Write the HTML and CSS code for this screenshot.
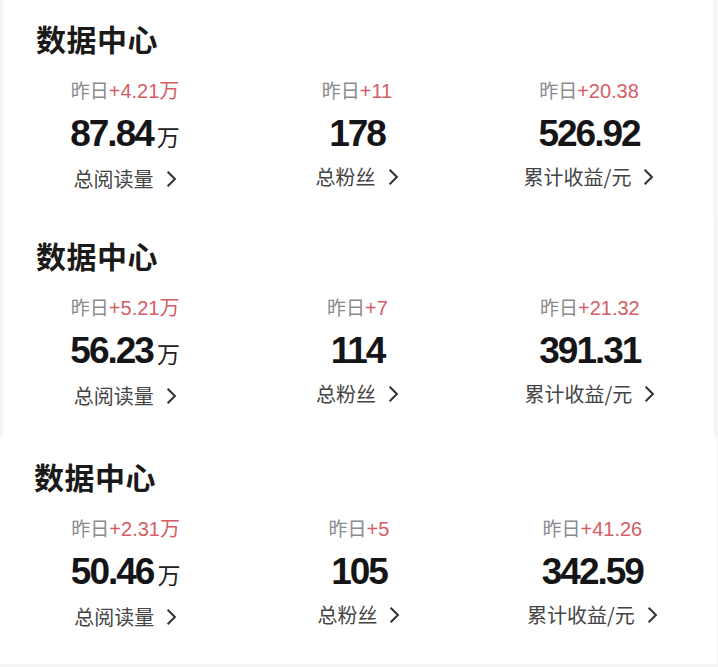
FILE: index.html
```html
<!DOCTYPE html>
<html lang="zh-CN">
<head>
  <meta charset="UTF-8" />
  <meta name="viewport" content="width=device-width, initial-scale=1.0" />
  <title>数据中心</title>
  <link rel="stylesheet" href="styles.css">
</head>
<body>
  <div class="card card-one">
    <h2 class="title">数据中心</h2>
    <div class="stats">
      <div class="stat">
        <div class="delta">昨日<span class="up">+4.21万</span></div>
        <div class="value">87.84<span class="unit">万</span></div>
        <div class="label">总阅读量 <svg class="chevron" viewBox="0 0 10 16"><polyline points="2,1.5 8.5,8 2,14.5" /></svg></div>
      </div>
      <div class="stat">
        <div class="delta">昨日<span class="up">+11</span></div>
        <div class="value">178</div>
        <div class="label">总粉丝 <svg class="chevron" viewBox="0 0 10 16"><polyline points="2,1.5 8.5,8 2,14.5" /></svg></div>
      </div>
      <div class="stat">
        <div class="delta">昨日<span class="up">+20.38</span></div>
        <div class="value">526.92</div>
        <div class="label">累计收益/元 <svg class="chevron" viewBox="0 0 10 16"><polyline points="2,1.5 8.5,8 2,14.5" /></svg></div>
      </div>
    </div>
  </div>

  <div class="card card-two">
    <h2 class="title">数据中心</h2>
    <div class="stats">
      <div class="stat">
        <div class="delta">昨日<span class="up">+5.21万</span></div>
        <div class="value">56.23<span class="unit">万</span></div>
        <div class="label">总阅读量 <svg class="chevron" viewBox="0 0 10 16"><polyline points="2,1.5 8.5,8 2,14.5" /></svg></div>
      </div>
      <div class="stat">
        <div class="delta">昨日<span class="up">+7</span></div>
        <div class="value">114</div>
        <div class="label">总粉丝 <svg class="chevron" viewBox="0 0 10 16"><polyline points="2,1.5 8.5,8 2,14.5" /></svg></div>
      </div>
      <div class="stat">
        <div class="delta">昨日<span class="up">+21.32</span></div>
        <div class="value">391.31</div>
        <div class="label">累计收益/元 <svg class="chevron" viewBox="0 0 10 16"><polyline points="2,1.5 8.5,8 2,14.5" /></svg></div>
      </div>
    </div>
  </div>

  <div class="card card-three">
    <h2 class="title">数据中心</h2>
    <div class="stats">
      <div class="stat">
        <div class="delta">昨日<span class="up">+2.31万</span></div>
        <div class="value">50.46<span class="unit">万</span></div>
        <div class="label">总阅读量 <svg class="chevron" viewBox="0 0 10 16"><polyline points="2,1.5 8.5,8 2,14.5" /></svg></div>
      </div>
      <div class="stat">
        <div class="delta">昨日<span class="up">+5</span></div>
        <div class="value">105</div>
        <div class="label">总粉丝 <svg class="chevron" viewBox="0 0 10 16"><polyline points="2,1.5 8.5,8 2,14.5" /></svg></div>
      </div>
      <div class="stat">
        <div class="delta">昨日<span class="up">+41.26</span></div>
        <div class="value">342.59</div>
        <div class="label">累计收益/元 <svg class="chevron" viewBox="0 0 10 16"><polyline points="2,1.5 8.5,8 2,14.5" /></svg></div>
      </div>
    </div>
  </div>
</body>
</html>
```

FILE: styles.css
```css
body {
  margin: 0;
  background: #f5f5f7;
  font-family: "Liberation Sans", "Noto Sans CJK SC", sans-serif;
  color: #1a1a1a;
}
.card {
  background: white;
  box-sizing: border-box;
  padding: 18px 8px 0 6px;
}
.card-one {
  margin-left: 3px;
  width: 710px;
  height: 220px;
}
.card-two {
  margin-left: 3px;
  width: 711px;
  height: 217px;
  padding-top: 15px;
}
.card-three {
  width: 717px;
  height: 227px;
  padding: 19px 8px 0 9px;
}
.title {
  margin: 0 0 0 27px;
  font-family: "Noto Sans CJK SC", sans-serif;
  font-size: 30px;
  line-height: 40px;
  font-weight: 700;
  letter-spacing: 0.5px;
  color: #1a1a1a;
}
.card-three .title {
  margin-left: 25px;
}
.stats {
  display: grid;
  grid-template-columns: repeat(3, 1fr);
  margin-top: 21px;
}
.stat {
  display: flex;
  flex-direction: column;
  align-items: center;
}
.delta {
  font-size: 19px;
  line-height: 24px;
  color: #8a8a8f;
}
.up {
  font-size: 20px;
  color: #d45d66;
}
.value {
  margin-top: 9px;
  font-size: 37px;
  line-height: 42px;
  font-weight: 700;
  letter-spacing: -2px;
  color: #151518;
}
.unit {
  margin-left: 4px;
  font-family: "Noto Sans CJK SC", sans-serif;
  font-size: 23px;
  font-weight: 400;
  letter-spacing: 0;
  color: #222;
}
.label {
  display: flex;
  align-items: center;
  gap: 11px;
  margin-top: 8px;
  font-family: "Noto Sans CJK SC", sans-serif;
  font-size: 20px;
  line-height: 28px;
  color: #444;
}
.chevron {
  width: 12px;
  height: 18px;
  fill: none;
  stroke: #333;
  stroke-width: 1.8;
}
```
